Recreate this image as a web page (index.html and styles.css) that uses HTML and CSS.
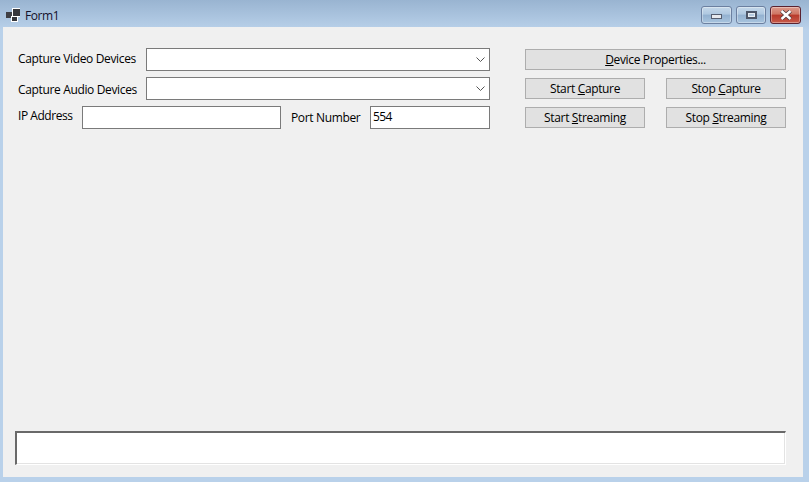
FILE: index.html
```html
<!DOCTYPE html>
<html lang="en">
<head>
<meta charset="utf-8">
<title>Form1</title>
<link rel="stylesheet" href="styles.css">
</head>
<body>
<div class="window">
  <header class="titlebar">
    <svg class="app-icon" width="14" height="14" viewBox="0 0 14 14">
      <rect x="0" y="4" width="7" height="6" fill="#3f3f44"/>
      <rect x="6" y="0" width="8" height="9" fill="#fff"/>
      <rect x="7" y="1" width="7" height="7" fill="#36363a"/>
      <rect x="5" y="8" width="7" height="6" fill="#fff"/>
      <rect x="6" y="9" width="5" height="4" fill="#36363a"/>
    </svg>
    <span class="title">Form1</span>
    <div class="controls">
      <div class="winbtn"><span class="glyph-min"></span></div>
      <div class="winbtn winbtn-max"><span class="glyph-max"></span></div>
      <div class="winbtn close">
        <svg width="14" height="10" viewBox="0 0 14 10"><path d="M2.500 1 L11.500 9 M11.500 1 L2.500 9" stroke="#4a3a3e" stroke-width="4"/><path d="M2.500 1 L11.500 9 M11.500 1 L2.500 9" stroke="#fff" stroke-width="2.400"/></svg>
      </div>
    </div>
  </header>
  <main class="client">
    <div class="top">
      <div class="fields">
        <div class="row">
          <label class="label label-wide label-video">Capture Video Devices</label>
          <div class="combo"><svg width="9" height="6" viewBox="0 0 9 6"><path d="M0.500 0.500 L4.500 4.500 L8.500 0.500" fill="none" stroke="#555" stroke-width="1"/></svg></div>
        </div>
        <div class="row">
          <label class="label label-wide label-audio">Capture Audio Devices</label>
          <div class="combo"><svg width="9" height="6" viewBox="0 0 9 6"><path d="M0.500 0.500 L4.500 4.500 L8.500 0.500" fill="none" stroke="#555" stroke-width="1"/></svg></div>
        </div>
        <div class="row">
          <label class="label label-ip">IP Address</label>
          <div class="input input-ip"></div>
          <label class="label label-port">Port Number</label>
          <div class="input input-port">554</div>
        </div>
      </div>
      <div class="buttons">
        <div class="btn btn-full"><span><u>D</u>evice Properties...</span></div>
        <div class="btn">Start&nbsp;<u>C</u>apture</div>
        <div class="btn">Stop&nbsp;<u>C</u>apture</div>
        <div class="btn">Start&nbsp;<u>S</u>treaming</div>
        <div class="btn">Stop&nbsp;<u>S</u>treaming</div>
      </div>
    </div>
    <div class="status"></div>
  </main>
</div>
</body>
</html>
```

FILE: styles.css
```css
* { box-sizing: border-box; }
html, body { margin: 0; padding: 0; overflow: hidden; }
body {
  width: 809px;
  height: 482px;
  font-family: "Open Sans", "Noto Sans", sans-serif;
  font-size: 12px;
  color: #000;
}
.window {
  width: 809px;
  height: 482px;
  display: flex;
  flex-direction: column;
  padding: 0 6px 5px 3px;
  background: linear-gradient(to bottom, #99b4d1 0, #b9d1ea 30px, #b9d1ea 100%);
}
.titlebar {
  height: 27px;
  display: flex;
  align-items: center;
  padding: 4px 2px 0 3px;
  flex: none;
}
.app-icon { flex: none; margin-top: -2px; }
.title { margin-left: 5px; color: #14102a; letter-spacing: -0.45px; }
.controls {
  margin-left: auto;
  align-self: flex-start;
  display: flex;
  gap: 4px;
  padding-top: 2px;
}
.winbtn {
  width: 31px;
  height: 18px;
  border: 1px solid #6c80a0;
  border-radius: 3px;
  display: flex;
  align-items: center;
  justify-content: center;
  background: linear-gradient(to bottom, #c5d8ea 0, #afc8e0 45%, #93b1d0 50%, #a8c4de 100%);
  box-shadow: inset 0 0 0 1px rgba(255,255,255,.35);
}
.winbtn-max { width: 30px; }
.winbtn.close {
  border-color: #5a2230;
  background: linear-gradient(to bottom, #dc9a8c 0, #cf7563 45%, #b8392a 50%, #c75a4a 100%);
}
.glyph-min {
  width: 11px;
  height: 5px;
  margin-top: 3px;
  background: #e6e9ee;
  border: 1px solid #555e70;
}
.glyph-max {
  width: 11px;
  height: 8px;
  background: #b6cbe0;
  border: 2px solid #4d5668;
  outline: 1px solid #e6ecf2;
  outline-offset: -3px;
}
.client {
  flex: 1;
  background: #f0f0f0;
  display: flex;
  flex-direction: column;
  padding: 21px 17px 12px 12px;
}
.top {
  display: flex;
  gap: 35px;
  padding-left: 3px;
}
.fields {
  width: 472px;
  display: flex;
  flex-direction: column;
  gap: 6px;
}
.row {
  display: flex;
  align-items: center;
  height: 23px;
}
.label { white-space: nowrap; letter-spacing: -0.35px; line-height: 16px; }
.label-wide { width: 128px; flex: none; }
.label-video { margin-top: -2px; }
.label-audio { margin-top: 3px; }
.label-ip { width: 64px; flex: none; margin-top: -3px; letter-spacing: -0.45px; }
.label-port { width: 79px; flex: none; margin-left: 10px; }
.combo, .input {
  height: 23px;
  background: #fff;
  border: 1px solid #7a7a7a;
}
.combo {
  flex: 1;
  display: flex;
  align-items: center;
  justify-content: flex-end;
  padding-right: 4px;
}
.input-ip { width: 199px; flex: none; }
.input-port {
  width: 120px;
  flex: none;
  padding-left: 2px;
  line-height: 20px;
  letter-spacing: -0.6px;
}
.buttons {
  width: 261px;
  padding-top: 1px;
  display: grid;
  grid-template-columns: 120px 120px;
  column-gap: 21px;
  row-gap: 8px;
  grid-auto-rows: 21px;
}
.btn {
  background: #e1e1e1;
  border: 1px solid #adadad;
  display: flex;
  align-items: center;
  justify-content: center;
  white-space: nowrap;
  letter-spacing: -0.35px;
}
.btn-full { grid-column: 1 / -1; }
.status {
  margin-top: auto;
  width: 771px;
  height: 34px;
  background: #fff;
  border-style: solid;
  border-width: 2px 1px 1px 2px;
  border-color: #696969 #fff #fff #696969;
  box-shadow: inset -1px -1px 0 #e3e3e3;
}
```
